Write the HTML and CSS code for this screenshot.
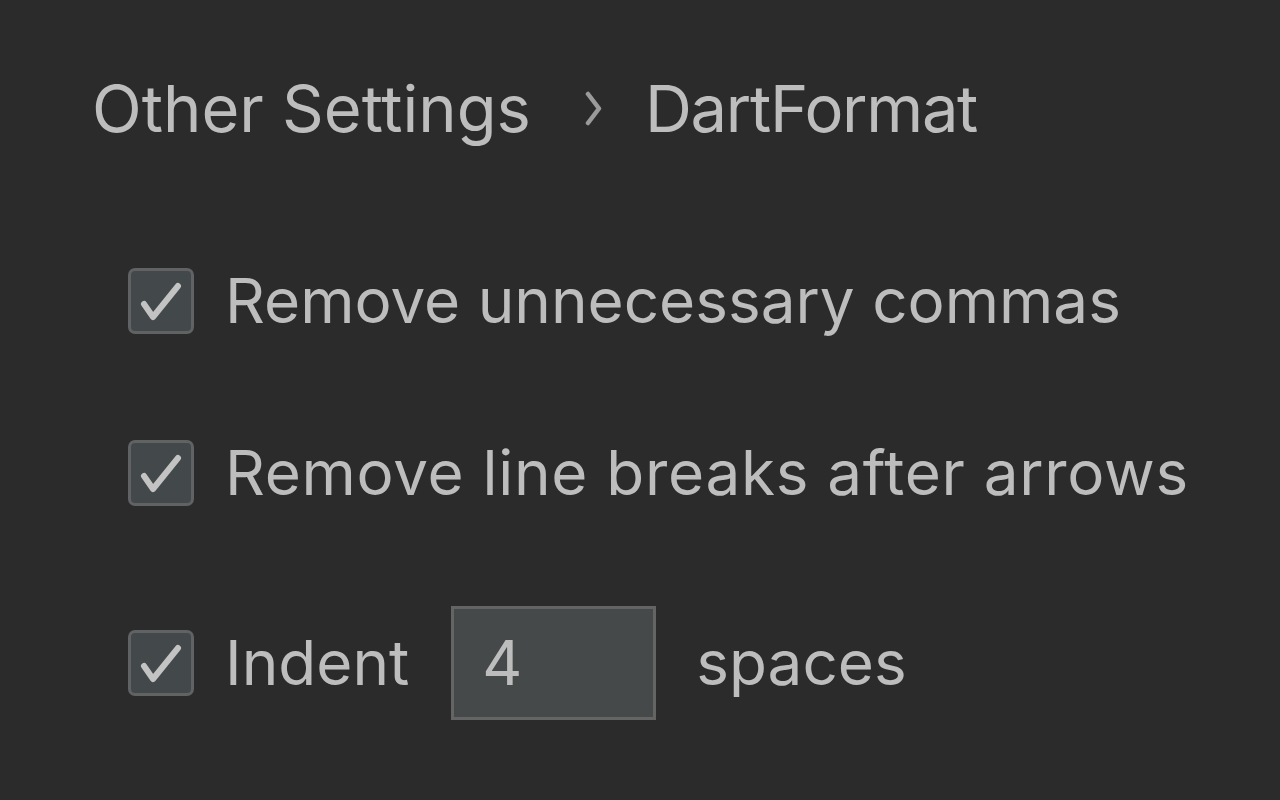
FILE: index.html
```html
<!DOCTYPE html>
<html lang="en">
<head>
<meta charset="utf-8">
<title>DartFormat</title>
<link rel="stylesheet" href="styles.css">
</head>
<body>
<div class="page">
  <div class="breadcrumb">
    <span class="crumb">Other Settings</span>
    <svg class="sep" viewBox="0 0 17 35" width="17" height="35"><path d="M3 3 L14 17.5 L3 32" fill="none" stroke="#9a9a9a" stroke-width="4.5" stroke-linecap="round" stroke-linejoin="round"/></svg>
    <span class="crumb crumb-current">DartFormat</span>
  </div>
  <div class="options">
    <label class="row">
      <span class="checkbox"><svg viewBox="0 0 60 60" width="60" height="60"><path d="M13 33 L22 46 L47 15" fill="none" stroke="#c3c3c3" stroke-width="6" stroke-linecap="round" stroke-linejoin="round"/></svg></span>
      <span class="label">Remove unnecessary commas</span>
    </label>
    <label class="row">
      <span class="checkbox"><svg viewBox="0 0 60 60" width="60" height="60"><path d="M13 33 L22 46 L47 15" fill="none" stroke="#c3c3c3" stroke-width="6" stroke-linecap="round" stroke-linejoin="round"/></svg></span>
      <span class="label label-wide">Remove line breaks after arrows</span>
    </label>
    <div class="row row-indent">
      <span class="checkbox"><svg viewBox="0 0 60 60" width="60" height="60"><path d="M13 33 L22 46 L47 15" fill="none" stroke="#c3c3c3" stroke-width="6" stroke-linecap="round" stroke-linejoin="round"/></svg></span>
      <span class="label">Indent</span>
      <span class="field">4</span>
      <span class="label">spaces</span>
    </div>
  </div>
</div>
</body>
</html>
```
FILE: styles.css
```css
html, body {
  margin: 0;
  padding: 0;
  background: #2b2b2b;
}
body {
  width: 1280px;
  height: 800px;
  overflow: hidden;
  font-family: Inter, "Noto Sans", sans-serif;
  color: #bdbdbd;
}
.page {
  padding: 70px 0 0 92px;
}
.breadcrumb {
  display: flex;
  align-items: center;
  height: 76px;
  font-size: 65px;
  line-height: 1;
}
.crumb-current {
  letter-spacing: -1.3px;
}
.sep {
  display: block;
  flex: none;
  margin: 0 43px 0 54px;
}
.options {
  display: flex;
  flex-direction: column;
  gap: 94px;
  margin-top: 116px;
  padding-left: 36px;
}
.row {
  display: flex;
  align-items: center;
  height: 78px;
  font-size: 62px;
  line-height: 1;
}
.label-wide {
  letter-spacing: 0.7px;
}
.row-indent {
  height: 114px;
}
.checkbox {
  box-sizing: border-box;
  width: 66px;
  height: 66px;
  border: 3px solid #606263;
  border-radius: 7px;
  background: #43494b;
  display: flex;
  align-items: center;
  justify-content: center;
  flex: none;
  margin-right: 31px;
}
.checkbox svg {
  display: block;
  flex: none;
}
.field {
  box-sizing: border-box;
  width: 205px;
  height: 114px;
  border: 3px solid #646464;
  background: #45494a;
  padding-left: 28px;
  display: flex;
  align-items: center;
  margin: 0 40px 0 42px;
  font-size: 62px;
}
```
